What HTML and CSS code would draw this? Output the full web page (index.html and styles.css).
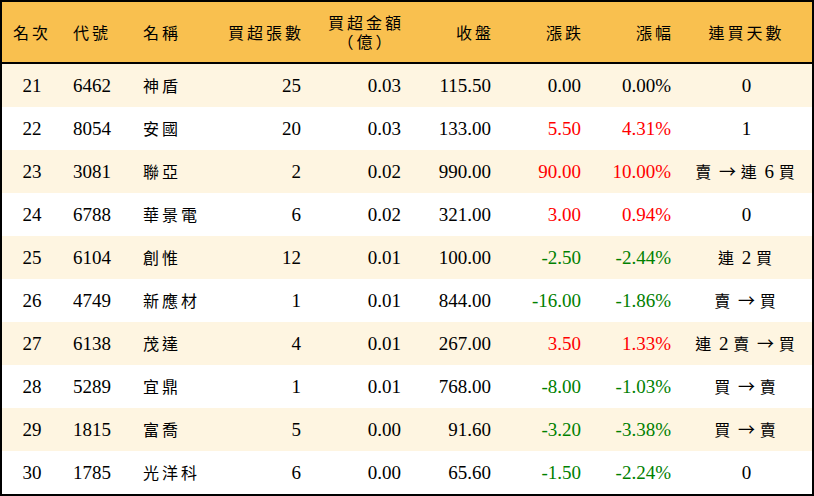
FILE: index.html
```html
<!DOCTYPE html>
<html lang="zh-Hant">
<head>
<meta charset="utf-8">
<title>買超排行</title>
<link rel="stylesheet" href="styles.css">
</head>
<body>
<div class="table">
  <div class="row head">
    <div class="c ctr"><span class="zh">名次</span></div>
    <div class="c code"><span class="zh">代號</span></div>
    <div class="c name"><span class="zh">名稱</span></div>
    <div class="c r"><span class="zh end">買超張數</span></div>
    <div class="c r"><span class="zh end two"><span class="ln">買超金額</span><span class="ln">（億）</span></span></div>
    <div class="c r"><span class="zh end">收盤</span></div>
    <div class="c r"><span class="zh end">漲跌</span></div>
    <div class="c r"><span class="zh end">漲幅</span></div>
    <div class="c ctr"><span class="zh">連買天數</span></div>
  </div>
  <div class="row odd">
    <div class="c ctr">21</div><div class="c code">6462</div><div class="c name"><span class="zh">神盾</span></div>
    <div class="c r">25</div><div class="c r">0.03</div><div class="c r">115.50</div>
    <div class="c r">0.00</div><div class="c r">0.00%</div><div class="c ctr">0</div>
  </div>
  <div class="row">
    <div class="c ctr">22</div><div class="c code">8054</div><div class="c name"><span class="zh">安國</span></div>
    <div class="c r">20</div><div class="c r">0.03</div><div class="c r">133.00</div>
    <div class="c r up">5.50</div><div class="c r up">4.31%</div><div class="c ctr">1</div>
  </div>
  <div class="row odd">
    <div class="c ctr">23</div><div class="c code">3081</div><div class="c name"><span class="zh">聯亞</span></div>
    <div class="c r">2</div><div class="c r">0.02</div><div class="c r">990.00</div>
    <div class="c r up">90.00</div><div class="c r up">10.00%</div>
    <div class="c ctr"><span class="zh">賣</span> <span class="ar">→</span> <span class="zh">連</span> 6 <span class="zh">買</span></div>
  </div>
  <div class="row">
    <div class="c ctr">24</div><div class="c code">6788</div><div class="c name"><span class="zh">華景電</span></div>
    <div class="c r">6</div><div class="c r">0.02</div><div class="c r">321.00</div>
    <div class="c r up">3.00</div><div class="c r up">0.94%</div><div class="c ctr">0</div>
  </div>
  <div class="row odd">
    <div class="c ctr">25</div><div class="c code">6104</div><div class="c name"><span class="zh">創惟</span></div>
    <div class="c r">12</div><div class="c r">0.01</div><div class="c r">100.00</div>
    <div class="c r down">-2.50</div><div class="c r down">-2.44%</div>
    <div class="c ctr"><span class="zh">連</span> 2 <span class="zh">買</span></div>
  </div>
  <div class="row">
    <div class="c ctr">26</div><div class="c code">4749</div><div class="c name"><span class="zh">新應材</span></div>
    <div class="c r">1</div><div class="c r">0.01</div><div class="c r">844.00</div>
    <div class="c r down">-16.00</div><div class="c r down">-1.86%</div>
    <div class="c ctr"><span class="zh">賣</span> <span class="ar">→</span> <span class="zh">買</span></div>
  </div>
  <div class="row odd">
    <div class="c ctr">27</div><div class="c code">6138</div><div class="c name"><span class="zh">茂達</span></div>
    <div class="c r">4</div><div class="c r">0.01</div><div class="c r">267.00</div>
    <div class="c r up">3.50</div><div class="c r up">1.33%</div>
    <div class="c ctr"><span class="zh">連</span> 2 <span class="zh">賣</span> <span class="ar">→</span> <span class="zh">買</span></div>
  </div>
  <div class="row">
    <div class="c ctr">28</div><div class="c code">5289</div><div class="c name"><span class="zh">宜鼎</span></div>
    <div class="c r">1</div><div class="c r">0.01</div><div class="c r">768.00</div>
    <div class="c r down">-8.00</div><div class="c r down">-1.03%</div>
    <div class="c ctr"><span class="zh">買</span> <span class="ar">→</span> <span class="zh">賣</span></div>
  </div>
  <div class="row odd">
    <div class="c ctr">29</div><div class="c code">1815</div><div class="c name"><span class="zh">富喬</span></div>
    <div class="c r">5</div><div class="c r">0.00</div><div class="c r">91.60</div>
    <div class="c r down">-3.20</div><div class="c r down">-3.38%</div>
    <div class="c ctr"><span class="zh">買</span> <span class="ar">→</span> <span class="zh">賣</span></div>
  </div>
  <div class="row">
    <div class="c ctr">30</div><div class="c code">1785</div><div class="c name"><span class="zh">光洋科</span></div>
    <div class="c r">6</div><div class="c r">0.00</div><div class="c r">65.60</div>
    <div class="c r down">-1.50</div><div class="c r down">-2.24%</div><div class="c ctr">0</div>
  </div>
</div>
</body>
</html>
```

FILE: styles.css
```css
html, body {
  margin: 0;
  padding: 0;
  background: #ffffff;
}
body {
  font-family: "Liberation Serif", "Noto Sans CJK TC", serif;
  font-size: 19px;
  color: #000000;
}
.table {
  width: 814px;
  height: 496px;
  box-sizing: border-box;
  border: 2px solid #000000;
  background: #ffffff;
}
.row {
  display: grid;
  grid-template-columns: 60px 68px 81px 100px 100px 90px 90px 90px 131px;
  height: 43px;
  align-items: center;
  white-space: nowrap;
}
.row.head {
  height: 62px;
  box-sizing: border-box;
  background: #f9c04f;
  border-bottom: 2px solid #000000;
}
.row.odd {
  background: #fef5e1;
}
.c {
  line-height: 20px;
}
.ctr {
  text-align: center;
}
.code {
  padding-left: 11px;
}
.name {
  padding-left: 13px;
}
.r {
  text-align: right;
  padding-right: 10px;
}
.zh {
  font-family: "Noto Sans CJK TC", sans-serif;
  font-size: 16px;
  font-weight: 400;
  letter-spacing: 3px;
}
.zh.end {
  margin-right: -3px;
}
.two {
  display: inline-flex;
  flex-direction: column;
  align-items: center;
  gap: 0;
  line-height: 19px;
}
.ln {
  display: block;
}
.ar {
  font-family: "Noto Sans CJK TC", sans-serif;
  font-size: 17px;
  font-weight: 400;
}
.up {
  color: #ff0000;
}
.down {
  color: #008000;
}
```
